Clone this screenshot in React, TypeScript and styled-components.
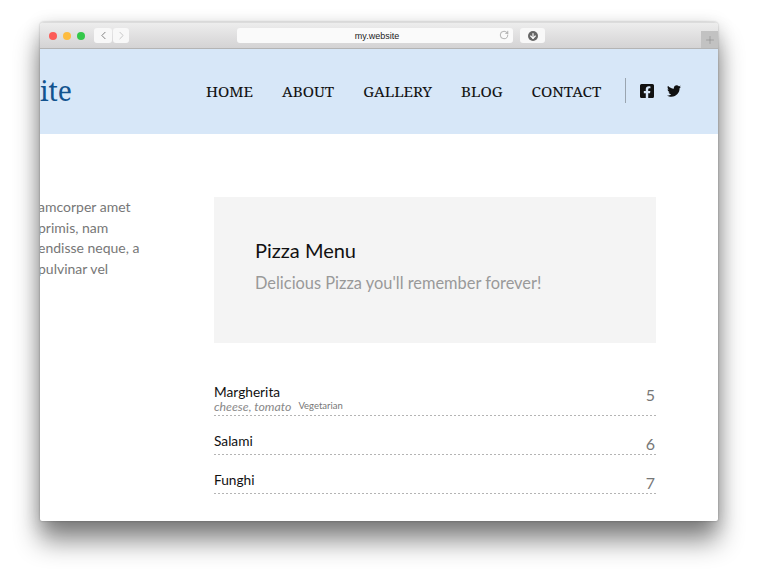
import React from "react";
import styled, { createGlobalStyle } from "styled-components";
import { ChevronLeft, ChevronRight, RotateCw, ArrowDown, Plus } from "lucide-react";
import { FaFacebookSquare, FaTwitter } from "react-icons/fa";

const Global = createGlobalStyle`
  html, body { margin: 0; padding: 0; background: #fff; }
  body { width: 758px; height: 578px; overflow: hidden; font-family: "Lato", "Liberation Sans", sans-serif; }
  * { box-sizing: border-box; }
`;

const Stage = styled.div`
  width: 758px;
  height: 578px;
  padding: 22px 40px 0;
`;

const Browser = styled.div`
  width: 678px;
  height: 499px;
  display: flex;
  flex-direction: column;
  border-radius: 4px 4px 2px 2px;
  overflow: hidden;
  background: #fff;
  box-shadow: 0 0 2px rgba(0,0,0,0.3), 0 20px 26px rgba(0,0,0,0.46), 0 4px 18px rgba(0,0,0,0.18);
`;

const Toolbar = styled.div`
  height: 27px;
  flex: none;
  display: flex;
  align-items: center;
  padding: 0 0 0 9px;
  background: linear-gradient(#ededed, #d4d3d4);
  border-top: 1px solid #dcdcdc;
  border-bottom: 1px solid #b4b4b4;
`;

const Light = styled.span<{ $c: string }>`
  width: 8px;
  height: 8px;
  border-radius: 50%;
  margin-right: 6px;
  background: ${(p) => p.$c};
`;

const NavGroup = styled.div`
  display: flex;
  gap: 1px;
  margin-left: 3px;
`;

const ToolButton = styled.div<{ $w: number }>`
  width: ${(p) => p.$w}px;
  height: 15px;
  border-radius: 3px;
  background: #f8f8f8;
  display: flex;
  align-items: center;
  justify-content: center;
  flex: none;
`;

const Address = styled.div`
  width: 276px;
  height: 15px;
  margin-left: 108px;
  padding-left: 4px;
  border-radius: 3px;
  background: #fafafa;
  position: relative;
  display: flex;
  align-items: center;
  justify-content: center;
  font: 9px "Liberation Sans", sans-serif;
  color: #222;
`;

const Reload = styled.span`
  position: absolute;
  right: 4px;
  top: 2px;
  display: flex;
  color: #888;
`;

const DownloadWrap = styled.div`
  margin-left: 7px;
`;

const DownloadDot = styled.span`
  width: 10px;
  height: 10px;
  border-radius: 50%;
  background: #666;
  display: flex;
  align-items: center;
  justify-content: center;
  color: #fff;
`;

const NewTab = styled.div`
  width: 17px;
  height: 17px;
  margin-left: auto;
  align-self: flex-end;
  background: #c2c2c2;
  color: #8a8a8a;
  display: flex;
  align-items: center;
  justify-content: center;
`;

const Header = styled.header`
  height: 85px;
  flex: none;
  padding-bottom: 2px;
  background: #d7e7f8;
  display: flex;
  align-items: center;
  overflow: hidden;
`;

const Logo = styled.div`
  width: 166px;
  flex: none;
  font: 26.5px "Noto Serif", "DejaVu Serif", serif;
  color: #12538f;
  overflow: hidden;
`;

const Nav = styled.nav`
  display: flex;
  gap: 29px;
  font: 15.2px "Noto Serif", "DejaVu Serif", serif;
  color: #111;
  -webkit-text-stroke: 0.08px #111;
`;

const NavLink = styled.a`
  white-space: nowrap;
`;

const Divider = styled.span`
  width: 1px;
  height: 25px;
  background: #9aa5b0;
  margin-left: 24px;
`;

const Social = styled.div`
  display: flex;
  gap: 12px;
  margin-left: 13px;
  color: #111;
  align-items: center;
`;

const Body = styled.main`
  flex: 1;
  display: flex;
  overflow: hidden;
`;

const Side = styled.aside`
  width: 176px;
  margin-left: -2px;
  flex: none;
  padding-top: 63px;
  font-size: 14px;
  line-height: 20.5px;
  color: #777;
  white-space: nowrap;
`;

const Content = styled.section`
  width: 442px;
  padding-top: 63px;
`;

const Hero = styled.div`
  height: 146px;
  background: #f4f4f4;
  padding: 40px 41px 0;
`;

const HeroTitle = styled.h1`
  margin: 0;
  font-size: 20px;
  line-height: 26px;
  font-weight: 400;
  color: #111;
`;

const HeroSub = styled.p`
  margin: 7px 0 0;
  font-size: 16.4px;
  line-height: 26px;
  color: #999;
`;

const Menu = styled.div`
  margin-top: 40px;
`;

const Row = styled.div<{ $tall?: boolean }>`
  height: ${(p) => (p.$tall ? 33 : 39)}px;
  padding-bottom: 1px;
  display: flex;
  justify-content: space-between;
  align-items: flex-end;
  background: repeating-linear-gradient(to right, #b4b4b4 0 2.5px, transparent 2.5px 4px) left bottom / 100% 1px no-repeat;
`;

const Name = styled.div`
  font-size: 13.7px;
  line-height: 17px;
  color: #111;
  padding-bottom: 5px;
`;

const Desc = styled.div`
  display: flex;
  align-items: baseline;
  gap: 7px;
  line-height: 13px;
  margin-bottom: -4px;
`;

const Ingredients = styled.em`
  font-size: 12.3px;
  color: #888;
`;

const Tag = styled.span`
  font-size: 9.5px;
  color: #777;
  position: relative;
  top: -2px;
`;

const Price = styled.div<{ $raised?: boolean }>`
  font-size: 16px;
  line-height: 20px;
  color: #777;
  padding-right: 1px;
  margin-bottom: ${(p) => (p.$raised ? 10 : 0)}px;
`;

const pizzas = [
  { name: "Margherita", price: 5, desc: "cheese, tomato", tag: "Vegetarian" },
  { name: "Salami", price: 6 },
  { name: "Funghi", price: 7 },
];

export default function App() {
  return (
    <Stage>
      <Global />
      <Browser>
        <Toolbar>
          <Light $c="#fc5b57" />
          <Light $c="#fdbc40" />
          <Light $c="#34c84a" />
          <NavGroup>
            <ToolButton $w={18}><ChevronLeft size={13} color="#666" strokeWidth={1.5} /></ToolButton>
            <ToolButton $w={16}><ChevronRight size={13} color="#bbb" strokeWidth={1.5} /></ToolButton>
          </NavGroup>
          <Address>
            my.website
            <Reload><RotateCw size={10} strokeWidth={1.5} /></Reload>
          </Address>
          <DownloadWrap>
            <ToolButton $w={25}>
              <DownloadDot><ArrowDown size={8} strokeWidth={3.5} /></DownloadDot>
            </ToolButton>
          </DownloadWrap>
          <NewTab><Plus size={12} strokeWidth={1.2} /></NewTab>
        </Toolbar>
        <Header>
          <Logo>ite</Logo>
          <Nav>
            <NavLink>HOME</NavLink>
            <NavLink>ABOUT</NavLink>
            <NavLink>GALLERY</NavLink>
            <NavLink>BLOG</NavLink>
            <NavLink>CONTACT</NavLink>
          </Nav>
          <Divider />
          <Social>
            <FaFacebookSquare size={16} />
            <FaTwitter size={14} />
          </Social>
        </Header>
        <Body>
          <Side>
            amcorper amet<br />
            primis, nam<br />
            endisse neque, a<br />
            pulvinar vel
          </Side>
          <Content>
            <Hero>
              <HeroTitle>Pizza Menu</HeroTitle>
              <HeroSub>Delicious Pizza you'll remember forever!</HeroSub>
            </Hero>
            <Menu>
              {pizzas.map((p) => (
                <Row key={p.name} $tall={!!p.desc}>
                  <Name>
                    {p.name}
                    {p.desc && (
                      <Desc>
                        <Ingredients>{p.desc}</Ingredients>
                        <Tag>{p.tag}</Tag>
                      </Desc>
                    )}
                  </Name>
                  <Price $raised={!!p.desc}>{p.price}</Price>
                </Row>
              ))}
            </Menu>
          </Content>
        </Body>
      </Browser>
    </Stage>
  );
}
